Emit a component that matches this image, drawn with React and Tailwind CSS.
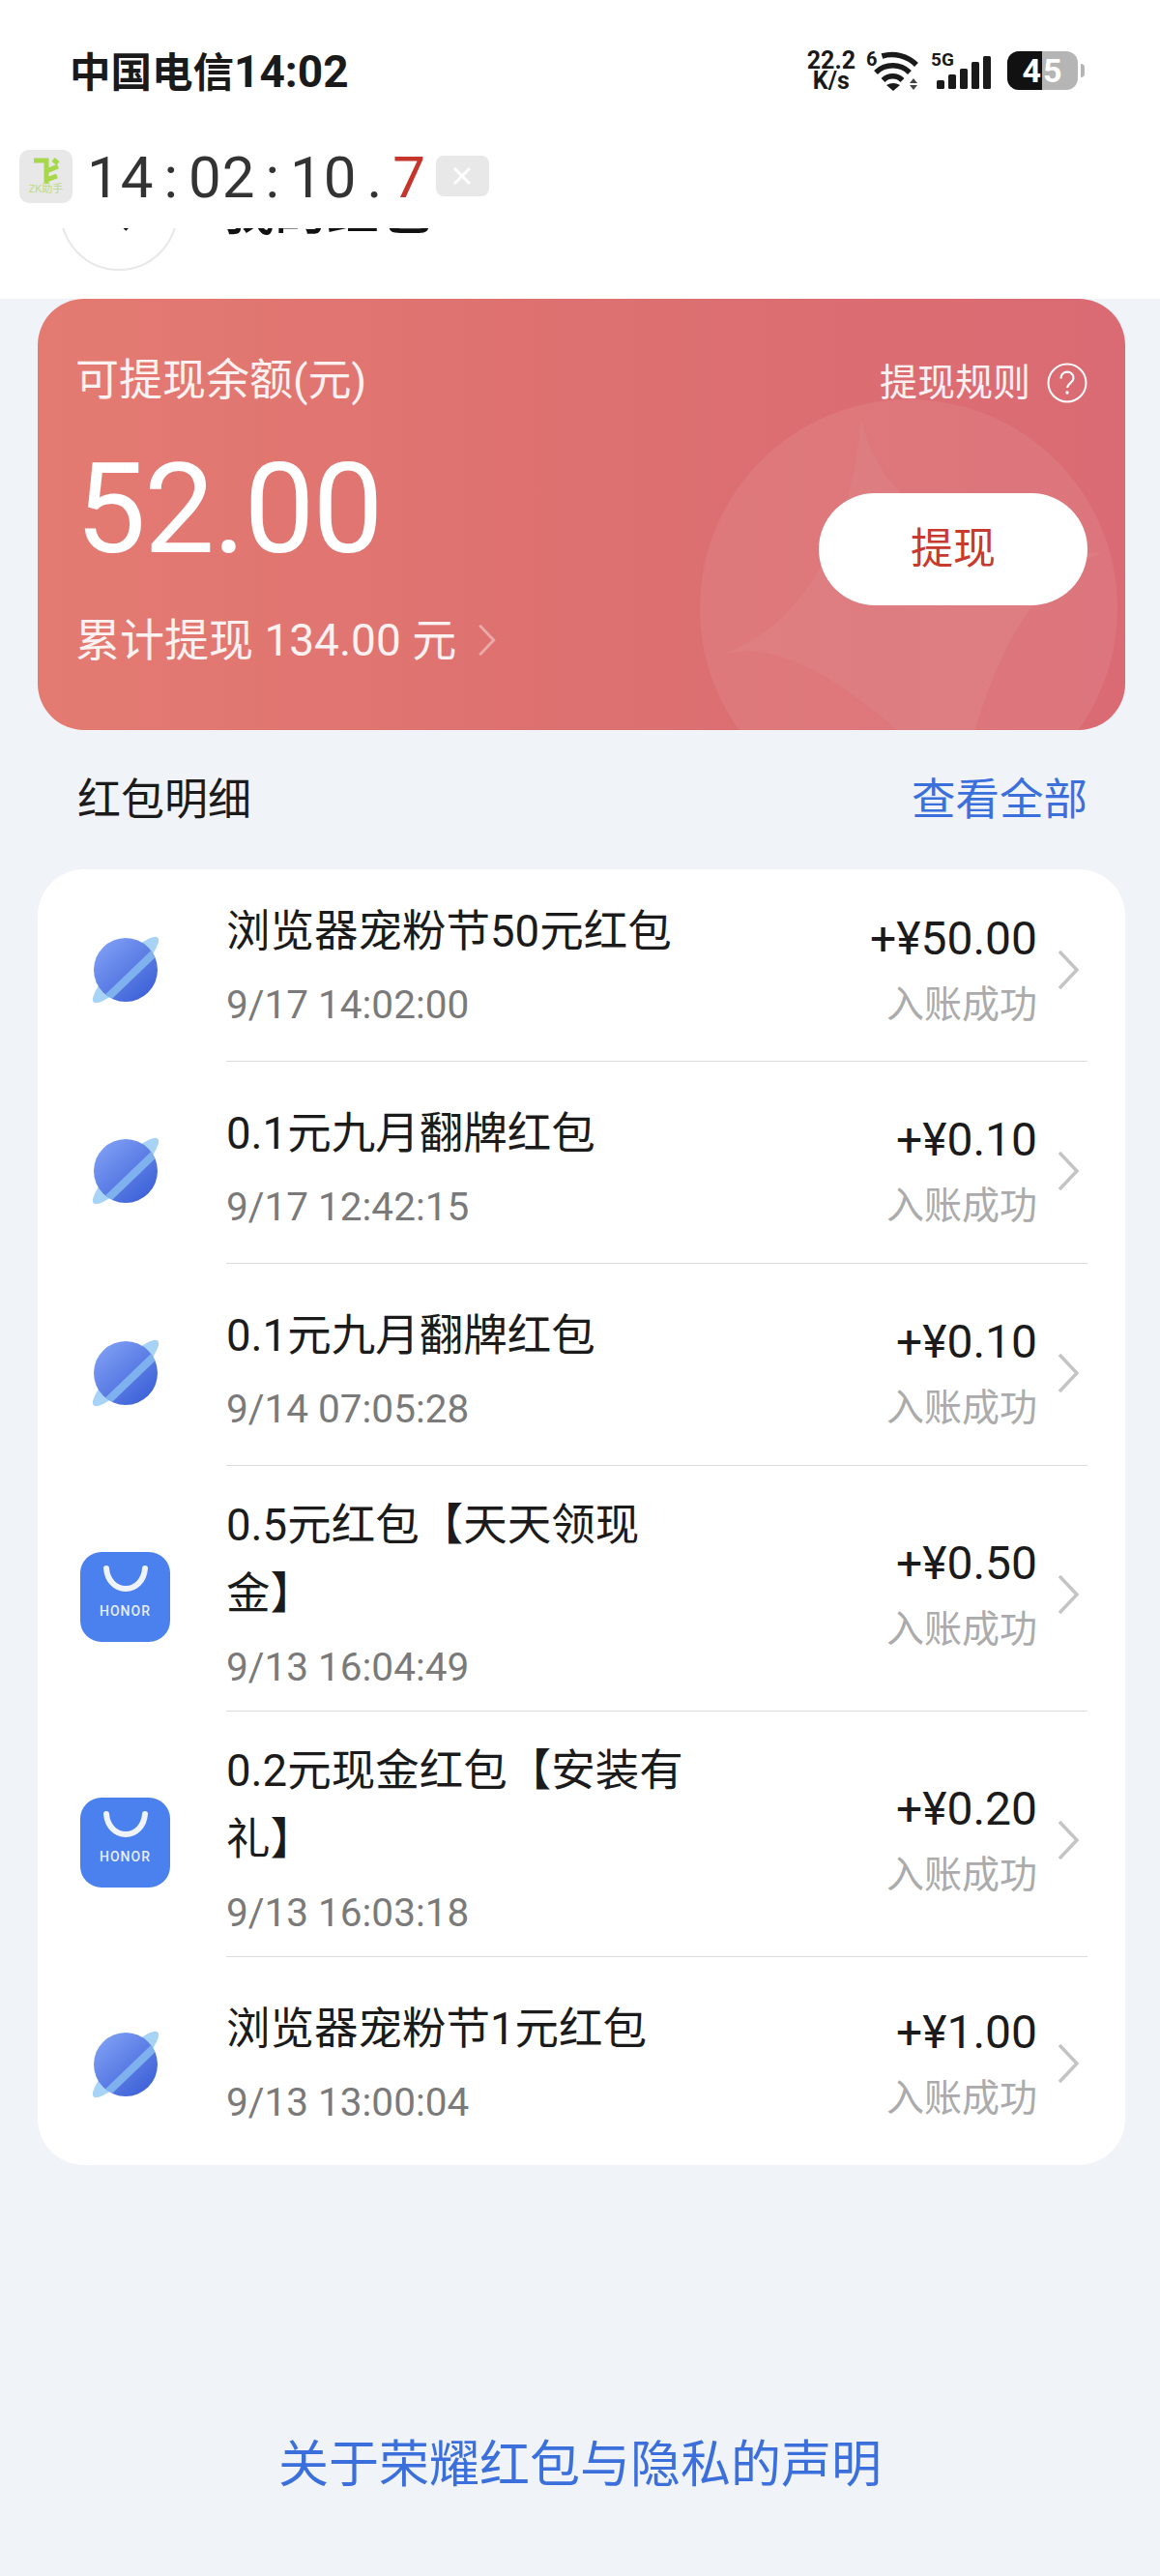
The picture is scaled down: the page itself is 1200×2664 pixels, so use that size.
const rows = [
    { icon: 'planet', title: '浏览器宠粉节50元红包', time: '9/17 14:02:00', amount: '+¥50.00', box: 'pt-[29px] pb-[31px]', side: 'pt-[9px]', right: 'pt-[11px]' },
    { icon: 'planet', title: '0.1元九月翻牌红包', time: '9/17 12:42:15', amount: '+¥0.10', box: 'pt-[39px] pb-[31px]', side: 'pt-[16px]', right: 'pt-[9px]' },
    { icon: 'planet', title: '0.1元九月翻牌红包', time: '9/14 07:05:28', amount: '+¥0.10', box: 'pt-[39px] pb-[31px]', side: 'pt-[16px]', right: 'pt-[9px]' },
    { icon: 'honor', title: '0.5元红包【天天领现金】', time: '9/13 16:04:49', amount: '+¥0.50', box: 'pt-[26px] pb-[18px]', side: 'pt-[16px]', right: 'pt-[4px]' },
    { icon: 'honor', title: '0.2元现金红包【安装有礼】', time: '9/13 16:03:18', amount: '+¥0.20', box: 'pt-[26px] pb-[18px]', side: 'pt-[16px]', right: 'pt-[4px]' },
    { icon: 'planet', title: '浏览器宠粉节1元红包', time: '9/13 13:00:04', amount: '+¥1.00', box: 'pt-[39px] pb-[38px]', side: 'pt-[7px]', right: 'pt-[4px]' },
];

function PlanetIcon({ id }) {
    return (
        <svg width="72" height="72" viewBox="0 0 72 72">
            <defs>
                <linearGradient id={id} x1="0.15" y1="0.1" x2="0.85" y2="0.9">
                    <stop offset="0" stopColor="#7c9cf3" />
                    <stop offset="1" stopColor="#3e62d8" />
                </linearGradient>
                <clipPath id={`${id}-clip`}>
                    <circle cx="36" cy="36" r="33" />
                </clipPath>
            </defs>
            <ellipse cx="36" cy="36" rx="47" ry="11" transform="rotate(-45 36 36)" fill="#a6d3f6" />
            <circle cx="36" cy="36" r="33" fill={`url(#${id})`} />
            <path d="M66 18L16 66" stroke="#7fb1ee" strokeWidth="8" clipPath={`url(#${id}-clip)`} />
        </svg>
    );
}

function HonorIcon() {
    return (
        <div className="flex h-[93px] w-[93px] flex-col items-center rounded-[22px] bg-[#4b80ef]">
            <svg width="48" height="30" viewBox="0 0 48 30" className="mt-[13px]">
                <path d="M4 4c1 12 9 21 20 21s19-9 20-21" fill="none" stroke="#eef3fe" strokeWidth="6" strokeLinecap="round" />
            </svg>
            <span className="mt-[10px] text-[14px] leading-[16px] font-medium tracking-[1px] text-[#e6eefc]">HONOR</span>
        </div>
    );
}

function WifiIcon() {
    return (
        <svg width="56" height="44" viewBox="0 0 56 44">
            <text x="1" y="17" fontSize="20" fontWeight="700" fill="#1a1a1a">6</text>
            <path d="M17.400 7A36 36 0 0 1 53 16" fill="none" stroke="#1a1a1a" strokeWidth="5.500" />
            <path d="M11 24A25 25 0 0 1 46 24" fill="none" stroke="#1a1a1a" strokeWidth="5.500" />
            <path d="M18.500 32A14 14 0 0 1 38.500 32" fill="none" stroke="#1a1a1a" strokeWidth="5.500" />
            <path d="M22 37Q29 33 36 37L29 43Z" fill="#1a1a1a" />
            <path d="M50 30l4 5h-8zM50 42l4-5h-8z" fill="#444" />
        </svg>
    );
}

function SignalIcon() {
    return (
        <svg width="64" height="42" viewBox="0 0 64 42">
            <text x="0" y="16" fontSize="19" fontWeight="700" fill="#1a1a1a">5G</text>
            <rect x="6" y="31" width="8" height="9" rx="1.500" fill="#1a1a1a" />
            <rect x="18" y="25" width="8" height="15" rx="1.500" fill="#1a1a1a" />
            <rect x="30" y="19" width="8" height="21" rx="1.500" fill="#1a1a1a" />
            <rect x="42" y="12" width="8" height="28" rx="1.500" fill="#1a1a1a" />
            <rect x="54" y="6" width="8" height="34" rx="1.500" fill="#1a1a1a" />
        </svg>
    );
}

function Chevron({ className }) {
    return (
        <svg className={className} viewBox="0 0 26 44">
            <path d="M4 3l18 19L4 41" fill="none" stroke="currentColor" strokeWidth="3.500" />
        </svg>
    );
}

function Row({ row, index, last }) {
    return (
        <div className="flex">
            <div className={`flex w-[195px] shrink-0 items-center justify-center pr-[14px] ${row.side}`}>
                {row.icon === 'planet' ? <PlanetIcon id={`planet-${index}`} /> : <HonorIcon />}
            </div>
            <div className={`flex min-w-0 flex-1 pr-[7px] ${row.box} ${last ? '' : 'border-b border-[#dcdcdc]'}`}>
                <div className="w-[500px] shrink-0">
                    <div className="w-[480px] text-[45.5px] leading-[71px] text-[#1b1b1b]">{row.title}</div>
                    <div className="mt-[14px] text-[40.5px] leading-[53px] text-[#7a7a7a]">{row.time}</div>
                </div>
                <div className={`-my-[30px] flex flex-1 items-center ${row.right}`}>
                    <div className="flex-1 text-right">
                        <div className="text-[48px] leading-[60px] text-[#1b1b1b]">{row.amount}</div>
                        <div className="mt-[12px] text-[39px] leading-[52px] text-[#ababab]">入账成功</div>
                    </div>
                    <Chevron className="ml-[19px] h-[44px] w-[26px] shrink-0 text-[#c4c4c4]" />
                </div>
            </div>
        </div>
    );
}

export default function App() {
    return (
        <div className="relative flex min-h-[2664px] flex-col bg-[#f0f3f8] font-['Roboto','Noto_Sans_CJK_SC',sans-serif]">
            <header className="relative h-[309px] bg-white">
                {/* page title, mostly hidden under the floating clock */}
                <div className="flex items-center pt-[158px] pl-[62px]">
                    <div className="flex h-[122px] w-[122px] items-center justify-center rounded-full border-2 border-[#e8e8e8]">
                        <svg width="30" height="44" viewBox="0 0 30 44"><path d="M24 4L6 22l18 18" fill="none" stroke="#111" strokeWidth="5" /></svg>
                    </div>
                    <span className="ml-[46px] text-[54px] font-medium text-[#111]">我的红包</span>
                </div>

                <div className="absolute top-0 left-0 flex h-[236px] w-full flex-col bg-white">
                    <div className="flex h-[146px] items-center justify-between pr-[78px] pl-[72px]">
                        <span className="mt-[3px] text-[42.5px] font-bold text-[#1a1a1a]">中国电信<span className="text-[46px]">14:02</span></span>
                        <div className="flex items-center">
                            <div className="mr-[10px] flex flex-col items-center text-[25px] leading-[21px] font-bold text-[#1a1a1a]">
                                <span>22.2</span>
                                <span>K/s</span>
                            </div>
                            <WifiIcon />
                            <div className="ml-[12px]"><SignalIcon /></div>
                            <div className="ml-[15px] flex items-center">
                                <div className="flex h-[40px] w-[73px] overflow-hidden rounded-[12px] bg-[#b5b5b5] text-[34px] leading-[40px] font-bold text-white">
                                    <span className="w-[36px] bg-[#111] pr-[1px] text-right">4</span>
                                    <span className="pl-[1px]">5</span>
                                </div>
                                <span className="ml-[3px] h-[14px] w-[4px] rounded-r-full bg-[#b5b5b5]"></span>
                            </div>
                        </div>
                    </div>
                    <div className="flex items-start pl-[20px]">
                        <div className="mt-[9px] flex h-[55px] w-[55px] flex-col items-center rounded-[10px] bg-[#e8e8e8]">
                            <svg width="28" height="28" viewBox="0 0 28 28" className="mt-[7px]">
                                <path d="M1 4H14V28M14 15L26 10M14 24L25 20M21 3l5 4" fill="none" stroke="#a6d84a" strokeWidth="5" />
                            </svg>
                            <span className="text-[11px] leading-[12px] text-[#bcdc80]">ZK助手</span>
                        </div>
                        <div className="mt-[5px] ml-[15px] flex gap-[10px] text-[60px] leading-[66px] tracking-[1px] text-[#333]">
                            <span>14</span>
                            <span>:</span>
                            <span>02</span>
                            <span>:</span>
                            <span>10</span>
                            <span>.</span>
                            <span className="text-[#c5352c]">7</span>
                        </div>
                        <div className="mt-[15px] ml-[10px] flex h-[42px] w-[55px] items-center justify-center rounded-[8px] bg-[#e8e8e8]">
                            <svg width="22" height="22" viewBox="0 0 22 22"><path d="M3 3l16 16M19 3L3 19" stroke="#fff" strokeWidth="3" /></svg>
                        </div>
                    </div>
                </div>
            </header>

            <section className="relative mr-[36px] ml-[39px] h-[446px] overflow-hidden rounded-[48px] bg-gradient-to-r from-[#e47b72] via-[#dd7070] to-[#da6b74] text-white">
                {/* watermark behind the balance */}
                <svg className="absolute top-0 left-0" width="1125" height="446" viewBox="0 0 1125 446">
                    <circle cx="901" cy="320" r="216" fill="#fff" fillOpacity="0.07" />
                    <path d="M852 124Q880 260 1101 263Q999 297 954 508Q790 338 706 369Q833 322 852 124Z" fill="#fff" fillOpacity="0.05" />
                </svg>
                <div className="relative flex h-full justify-between pr-[39px] pl-[39px]">
                    <div>
                        <div className="mt-[55px] text-[45px] leading-[60px] text-white/90">可提现余额(元)</div>
                        <div className="mt-[35px] text-[130px] leading-[136px] tracking-[-2px]">52.00</div>
                        <div className="mt-[37px] flex items-center text-[46px] leading-[60px] text-white/90">
                            累计提现 134.00 元
                            <Chevron className="ml-[21px] h-[36px] w-[21px] text-white/40" />
                        </div>
                    </div>
                    <div className="flex flex-col items-end">
                        <div className="mt-[62px] flex h-[50px] items-center text-[39px] text-white/90">
                            提现规则
                            <svg className="ml-[17px]" width="42" height="42" viewBox="0 0 42 42">
                                <circle cx="21" cy="21" r="19.500" fill="none" stroke="#fff" strokeWidth="2" />
                                <path d="M14.500 16.500c0-9 13-9 13-.5 0 5-6 5-6.500 10" fill="none" stroke="#fff" strokeWidth="2.200" />
                                <circle cx="21" cy="31" r="1.700" fill="#fff" />
                            </svg>
                        </div>
                        <div className="mt-[89px] flex h-[116px] w-[278px] items-center justify-center rounded-full bg-white text-[44px] text-[#c8392e]">提现</div>
                    </div>
                </div>
            </section>

            <div className="mt-[40px] mr-[75px] ml-[80px] flex h-[66px] items-center justify-between">
                <span className="text-[45px] text-[#1b1b1b]">红包明细</span>
                <span className="text-[45.5px] text-[#3b70dc]">查看全部</span>
            </div>

            <div className="mt-[38px] mr-[36px] ml-[39px] rounded-[48px] bg-white pr-[39px]">
                {rows.map((row, i) => (
                    <Row key={i} row={row} index={i} last={i === rows.length - 1} />
                ))}
            </div>

            <div className="mt-[272px] text-center text-[52px] text-[#3b70dc]">关于荣耀红包与隐私的声明</div>
        </div>
    );
}
